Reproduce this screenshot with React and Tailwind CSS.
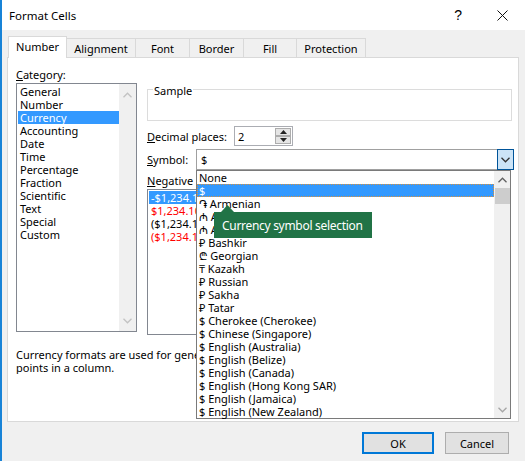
import React from 'react'

const categories = ['General', 'Number', 'Currency', 'Accounting', 'Date', 'Time', 'Percentage', 'Fraction', 'Scientific', 'Text', 'Special', 'Custom']

const negatives = [
  { text: '-$1,234.10', cls: 'bg-[#3399ff] text-white' },
  { text: '$1,234.10', cls: 'text-[#ff0000]' },
  { text: '($1,234.10)', cls: 'text-black' },
  { text: '($1,234.10)', cls: 'text-[#ff0000]' },
]

const symbols = [
  'None',
  '$',
  '֏ Armenian',
  '₼ Azerbaijani (Cyrillic)',
  '₼ Azerbaijani (Latin)',
  '₽ Bashkir',
  '₾ Georgian',
  '₸ Kazakh',
  '₽ Russian',
  '₽ Sakha',
  '₽ Tatar',
  '$ Cherokee (Cherokee)',
  '$ Chinese (Singapore)',
  '$ English (Australia)',
  '$ English (Belize)',
  '$ English (Canada)',
  '$ English (Hong Kong SAR)',
  '$ English (Jamaica)',
  '$ English (New Zealand)',
]

const tabs = [
  { name: 'Number', w: 'w-[59px]' },
  { name: 'Alignment', w: 'w-[70px]' },
  { name: 'Font', w: 'w-[55px]' },
  { name: 'Border', w: 'w-[55px]' },
  { name: 'Fill', w: 'w-[54px]' },
  { name: 'Protection', w: 'w-[70px]' },
]

function Chevron({ up, className }) {
  return (
    <svg width="9" height="6" viewBox="0 0 9 6" className={className}>
      <path d={up ? 'M0.5 5.2 L4.5 1.2 L8.5 5.2' : 'M0.5 0.8 L4.5 4.8 L8.5 0.8'} fill="none" stroke="currentColor" strokeWidth="1.3" />
    </svg>
  )
}

function SpinHalf({ up }) {
  return (
    <div className="flex-1 bg-[#e5e5e5] border border-[#adadad] flex items-center justify-center">
      <svg width="7" height="4" viewBox="0 0 7 4">
        <polygon points={up ? '0,4 3.5,0 7,4' : '0,0 3.5,4 7,0'} fill="#222" />
      </svg>
    </div>
  )
}

export default function App() {
  return (
    <div className="relative w-[525px] h-[461px] overflow-hidden bg-[#f0f0f0] border-l-2 border-[#1883d7] font-['Noto_Sans',sans-serif] text-[11px] leading-[13px] text-black">
      {/* title bar */}
      <div className="h-[30px] bg-white flex items-center pl-[7px] pr-[17px]">
        <span className="text-[11.5px]">Format Cells</span>
        <span className="ml-auto mr-[35px] text-[14px] font-['Liberation_Sans',sans-serif]">?</span>
        <svg width="11" height="11" viewBox="0 0 11 11">
          <path d="M0.5 0.5 L10.5 10.5 M10.5 0.5 L0.5 10.5" stroke="#111" strokeWidth="1" />
        </svg>
      </div>

      <div className="pl-[5px] pt-[6px]">
        {/* tabs */}
        <div className="flex items-end h-[21px] ml-[1px]">
          {tabs.map((t, i) =>
            i === 0 ? (
              <div key={t.name} className={`${t.w} h-[22px] -mb-px relative z-10 bg-white border-x border-t border-[#d9d9d9] flex items-center justify-center pb-[2px]`}>
                {t.name}
              </div>
            ) : (
              <div key={t.name} className={`${t.w} h-[19px] -ml-px border-x border-t border-[#d9d9d9] flex items-center justify-center`}>
                {t.name}
              </div>
            )
          )}
        </div>

        {/* number page */}
        <div className="w-[512px] h-[365px] overflow-hidden bg-white border border-[#d9d9d9] pl-[8px] pr-[6px] pt-[10px]">
          <div className="flex gap-[10px]">
            <div className="w-[121px]">
              <div className="h-[15px]">
                <span className="underline">C</span>ategory:
              </div>
              <div className="h-[249px] border border-[#828790] flex">
                <div className="flex-1 pt-[1px] pl-[1px]">
                  {categories.map((c) => (
                    <div key={c} className={`h-[13px] pl-[2px] ${c === 'Currency' ? 'bg-[#3399ff] text-white' : ''}`}>
                      {c}
                    </div>
                  ))}
                </div>
                <div className="w-[17px] bg-[#f0f0f0] flex flex-col items-center justify-between pt-[8px] pb-[7px] text-[#c2c2c2]">
                  <Chevron up />
                  <Chevron />
                </div>
              </div>
            </div>

            <div className="flex-1">
              <div className="relative mt-[21px] h-[32px] border border-[#dcdcdc]">
                <span className="absolute left-[5px] -top-[6px] bg-white px-[1px]">Sample</span>
              </div>

              <div className="mt-[5px] h-[20px] flex items-center">
                <div className="w-[87px]">
                  <span className="underline">D</span>ecimal places:
                </div>
                <div className="w-[59px] h-[20px] border border-[#abadb3] flex">
                  <div className="flex-1 pl-[3px] flex items-center">2</div>
                  <div className="w-[16px] flex flex-col py-[1px] mr-[1px]">
                    <SpinHalf up />
                    <SpinHalf />
                  </div>
                </div>
              </div>

              <div className="mt-[3px] h-[21px] flex items-center">
                <div className="w-[49px]">
                  <span className="underline">S</span>ymbol:
                </div>
                <div className="flex-1 h-[21px] border border-[#a0a0a0] flex items-center -mr-[2px]">
                  <span className="pl-[4px]">$</span>
                  <div className="ml-auto w-[17px] h-[21px] -my-px -mr-px border border-[#005499] bg-[#cce4f7] flex items-center justify-center text-[#333]">
                    <Chevron />
                  </div>
                </div>
              </div>

              <div className="mt-[4px] h-[15px]">
                <span className="underline">N</span>egative numbers:
              </div>
              <div className="w-[300px] h-[146px] border border-[#828790] pt-[1px] px-[1px]">
                {negatives.map((n, i) => (
                  <div key={i} className={`h-[13px] pl-[2px] ${n.cls}`}>
                    {n.text}
                  </div>
                ))}
              </div>
            </div>
          </div>

          <div className="mt-[13px] w-[470px] overflow-hidden whitespace-nowrap">
            <div>Currency formats are used for general monetary values. Use Accounting formats to align decimal</div>
            <div>points in a column.</div>
          </div>
        </div>
      </div>

      {/* dialog buttons */}
      <div className="mt-[10px] flex justify-end gap-[11px] pr-[16px]">
        <div className="w-[72px] h-[22px] border-2 border-[#0078d7] bg-[#e1e1e1] flex items-center justify-center">OK</div>
        <div className="w-[64px] h-[22px] border border-[#adadad] bg-[#e1e1e1] flex items-center justify-center">Cancel</div>
      </div>

      {/* open symbol dropdown */}
      <div className="absolute left-[194px] top-[170px] w-[315px] h-[249px] border border-[#7a7a7a] bg-white flex">
        <div className="flex-1">
          {symbols.map((s, i) => (
            <div
              key={i}
              className={`h-[13px] pl-[2px] whitespace-nowrap ${i === 1 ? 'bg-[#3399ff] text-white outline-1 outline-dotted outline-[#d9913d] -outline-offset-1' : ''}`}
            >
              {s}
            </div>
          ))}
        </div>
        <div className="w-[16px] bg-[#f0f0f0] flex flex-col">
          <div className="h-[17px] flex items-center justify-center text-[#606060]">
            <Chevron up />
          </div>
          <div className="h-[16px] ml-[1px] bg-[#cdcdcd]" />
          <div className="flex-1" />
          <div className="h-[17px] flex items-center justify-center text-[#a6a6a6]">
            <Chevron />
          </div>
        </div>
      </div>

      {/* tooltip */}
      <div className="absolute left-[212px] top-[212px] w-[158px] h-[26px] bg-[#217346] text-white text-[12px] tracking-[-0.3px] pl-[8px] flex items-center">
        <svg width="13" height="7" viewBox="0 0 13 7" className="absolute left-[7px] -top-[7px]">
          <polygon points="0,7 6.5,0 13,7" fill="#217346" />
        </svg>
        Currency symbol selection
      </div>
    </div>
  )
}
